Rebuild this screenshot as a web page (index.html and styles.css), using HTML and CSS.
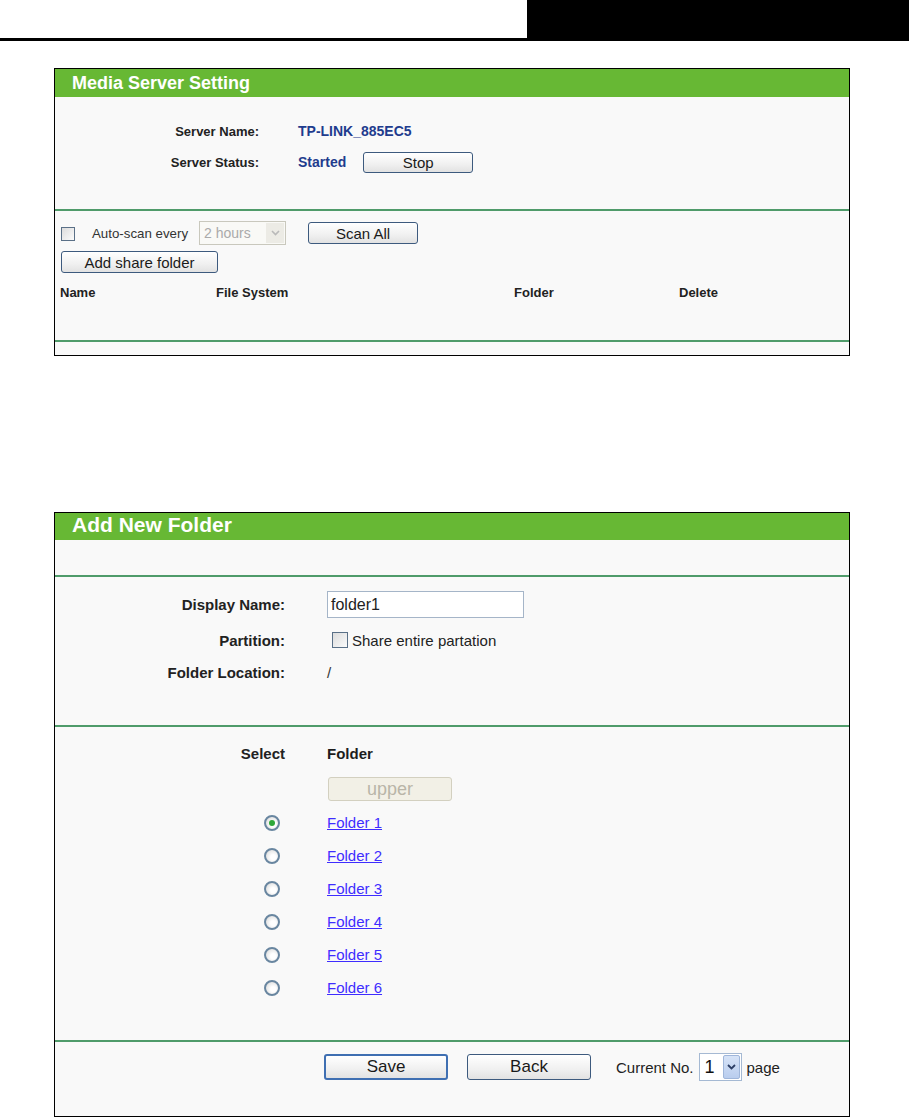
FILE: index.html
```html
<!DOCTYPE html>
<html>
<head>
<meta charset="utf-8">
<title>Media Server</title>
<link rel="stylesheet" href="styles.css">
</head>
<body>
<div class="topbar"><div class="topbar-left"></div><div class="topbar-right"></div></div>

<div class="panel panel-media">
  <div class="panel-head head-media">Media Server Setting</div>
  <div class="info">
    <div class="lbl">Server Name:</div><div class="val">TP-LINK_885EC5</div>
    <div class="lbl">Server Status:</div><div class="val">Started <button class="btn btn-stop">Stop</button></div>
  </div>
  <div class="sep"></div>
  <div class="share">
    <div class="scan-row">
      <span class="chk chk-small"></span>
      <span class="scan-text">Auto-scan every</span>
      <span class="sel sel-hours"><span class="sel-val">2 hours</span><span class="sel-arrow disabled"><svg width="9" height="6" viewBox="0 0 9 6"><path d="M1 1 L4.5 4.5 L8 1" fill="none" stroke="#b9b9b9" stroke-width="1.6"/></svg></span></span>
      <button class="btn btn-scan">Scan All</button>
    </div>
    <button class="btn btn-add">Add share folder</button>
    <div class="thead">
      <span>Name</span><span>File System</span><span>Folder</span><span>Delete</span>
    </div>
  </div>
  <div class="sep"></div>
  <div class="tail"></div>
</div>

<div class="panel panel-add">
  <div class="panel-head head-add">Add New Folder</div>
  <div class="band"></div>
  <div class="sep"></div>
  <div class="form">
    <div class="lbl2">Display Name:</div><div class="val2"><span class="input">folder1</span></div>
    <div class="lbl2">Partition:</div><div class="val2"><span class="chk chk-big"></span><span class="chk-text">Share entire partation</span></div>
    <div class="lbl2">Folder Location:</div><div class="val2 plain">/</div>
  </div>
  <div class="sep"></div>
  <div class="folders">
    <div class="lbl2 fh">Select</div><div class="val2 fh">Folder</div>
    <div></div><div class="val2 up-cell"><button class="btn btn-upper" disabled>upper</button></div>
    <div class="rad-cell"><span class="radio on"></span></div><div class="val2"><a href="#" class="flink">Folder 1</a></div>
    <div class="rad-cell"><span class="radio"></span></div><div class="val2"><a href="#" class="flink">Folder 2</a></div>
    <div class="rad-cell"><span class="radio"></span></div><div class="val2"><a href="#" class="flink">Folder 3</a></div>
    <div class="rad-cell"><span class="radio"></span></div><div class="val2"><a href="#" class="flink">Folder 4</a></div>
    <div class="rad-cell"><span class="radio"></span></div><div class="val2"><a href="#" class="flink">Folder 5</a></div>
    <div class="rad-cell"><span class="radio"></span></div><div class="val2"><a href="#" class="flink">Folder 6</a></div>
  </div>
  <div class="sep"></div>
  <div class="actions">
    <button class="btn btn-big btn-save">Save</button>
    <button class="btn btn-big btn-back">Back</button>
    <span class="cur cur-label">Current No.</span>
    <span class="sel sel-page"><span class="sel-val">1</span><span class="sel-arrow blue"><svg width="9" height="6" viewBox="0 0 9 6"><path d="M1 1 L4.5 4.5 L8 1" fill="none" stroke="#2d3f66" stroke-width="1.8"/></svg></span></span>
    <span class="cur">page</span>
  </div>
</div>
</body>
</html>
```

FILE: styles.css
```css
* { box-sizing: border-box; }
body {
  margin: 0;
  font-family: "Liberation Sans", Arial, sans-serif;
  background: #fff;
  color: #1d1d1d;
}
.topbar { display: flex; height: 41px; }
.topbar-left { width: 527px; border-bottom: 3px solid #000; }
.topbar-right { flex: 1; background: #000; }

.panel {
  margin-left: 54px;
  width: 796px;
  border: 1px solid #000;
  background: #f9f9f9;
}
.panel-media { margin-top: 27px; }
.panel-add { margin-top: 156px; }

.panel-head {
  background: #67b834;
  color: #fff;
  font-weight: bold;
  padding-left: 17px;
}
.head-media { height: 28px; line-height: 28px; font-size: 18px; }
.head-add { height: 27px; line-height: 24px; font-size: 21px; }

.sep { border-top: 2px solid #4f9b6a; }

/* Panel 1 */
.info {
  display: grid;
  grid-template-columns: 204px auto;
  grid-auto-rows: 22px;
  column-gap: 39px;
  row-gap: 9px;
  align-items: center;
  padding: 23px 0 36px;
}
.lbl { text-align: right; font-weight: bold; font-size: 13px; color: #222; }
.val { font-weight: bold; font-size: 14px; color: #1f3c8e; display: flex; align-items: center; }

.btn {
  font-family: "Liberation Sans", Arial, sans-serif;
  font-size: 15px;
  color: #1a1a1a;
  padding: 0;
  border: 1px solid #3d5a7e;
  border-radius: 3px;
  background: linear-gradient(#ffffff, #f0f0f0 60%, #e2e2e2);
}
.btn-stop { width: 110px; height: 21px; margin-left: 17px; font-size: 15px; line-height: 19px; }

.share { padding: 10px 0 39px 6px; }
.scan-row { display: flex; align-items: center; height: 24px; }
.chk {
  display: inline-block;
  border: 1px solid #5a7087;
  background: linear-gradient(135deg, #dcdcdc, #fbfbfb);
}
.chk-small { width: 14px; height: 14px; margin-top: 2px; }
.scan-text { margin-left: 17px; font-size: 13.3px; color: #333; }
.sel {
  display: inline-flex;
  align-items: stretch;
  border: 1px solid #c9c8bd;
  background: #fff;
}
.sel-hours { margin-left: 11px; width: 87px; height: 24px; background: #f9f9f6; }
.sel-val { flex: 1; font-size: 14px; color: #aaa; padding-left: 4px; line-height: 22px; }
.sel-arrow {
  width: 18px;
  display: flex;
  align-items: center;
  justify-content: center;
  margin: 1px;
}
.sel-arrow.disabled { background: #ecebe5; }
.btn-scan { margin-left: 22px; width: 110px; height: 22px; }
.btn-add { display: block; margin-top: 6px; width: 157px; height: 22px; font-size: 15px; }

.thead {
  display: grid;
  grid-template-columns: 156px 298px 165px auto;
  margin-top: 12px;
  margin-left: -1px;
  height: 16px;
  font-weight: bold;
  font-size: 13px;
  line-height: 16px;
  color: #222;
}
.tail { height: 13px; }

/* Panel 2 */
.band { height: 35px; }
.form, .folders {
  display: grid;
  grid-template-columns: 230px auto;
  column-gap: 42px;
  align-items: center;
}
.form {
  grid-template-rows: 27px 20px 20px;
  row-gap: 12px;
  padding: 14px 0 43px;
}
.lbl2 { text-align: right; font-weight: bold; font-size: 15px; color: #222; }
.val2 { font-size: 15px; display: flex; align-items: center; }
.plain { color: #333; }
.input {
  display: block;
  width: 197px;
  height: 27px;
  border: 1px solid #a5b5c8;
  background: #fff;
  font-size: 16px;
  line-height: 25px;
  padding-left: 3px;
  color: #222;
}
.chk-big { width: 16px; height: 16px; margin-left: 5px; }
.chk-text { margin-left: 4px; color: #222; }

.folders {
  grid-template-rows: 16px 45px repeat(6, 33px);
  padding: 18px 0 36px;
}
.fh { font-weight: bold; }
.up-cell { align-self: start; margin-top: 16px; }
.btn-upper {
  margin-left: 1px;
  width: 124px;
  height: 24px;
  font-size: 18px;
  color: #b9b5a8;
  border: 1px solid #d3d0c0;
  background: #f2f0e6;
}
.rad-cell { display: flex; justify-content: flex-end; padding-right: 5px; }
.radio {
  display: inline-block;
  width: 16px;
  height: 16px;
  border-radius: 50%;
  border: 2px solid #6986a0;
  background: radial-gradient(circle at 60% 60%, #fff 25%, #d4d4d4);
  position: relative;
}
.radio.on::after {
  content: "";
  position: absolute;
  left: 3px;
  top: 3px;
  width: 6px;
  height: 6px;
  border-radius: 50%;
  background: #2fa83a;
}
.flink { color: #3f2dff; text-decoration: underline; font-size: 15px; }

.actions {
  display: flex;
  align-items: center;
  height: 28px;
  box-sizing: content-box;
  padding: 11px 0 35px 269px;
}
.btn-big { width: 124px; height: 26px; font-size: 17px; }
.btn-save { border: 2px solid #3f6fb2; }
.btn-back { margin-left: 19px; }
.cur { font-size: 15px; color: #222; }
.cur-label { margin-left: 25px; }
.sel-page {
  margin: 0 5px;
  width: 43px;
  height: 28px;
  border: 1px solid #a5b9d3;
}
.sel-page .sel-val { color: #111; font-size: 18px; line-height: 26px; padding-left: 5px; }
.sel-arrow.blue {
  width: 17px;
  background: linear-gradient(#d6e3f7, #b9cdee);
  border: 1px solid #9fb6da;
  border-radius: 2px;
}
```
